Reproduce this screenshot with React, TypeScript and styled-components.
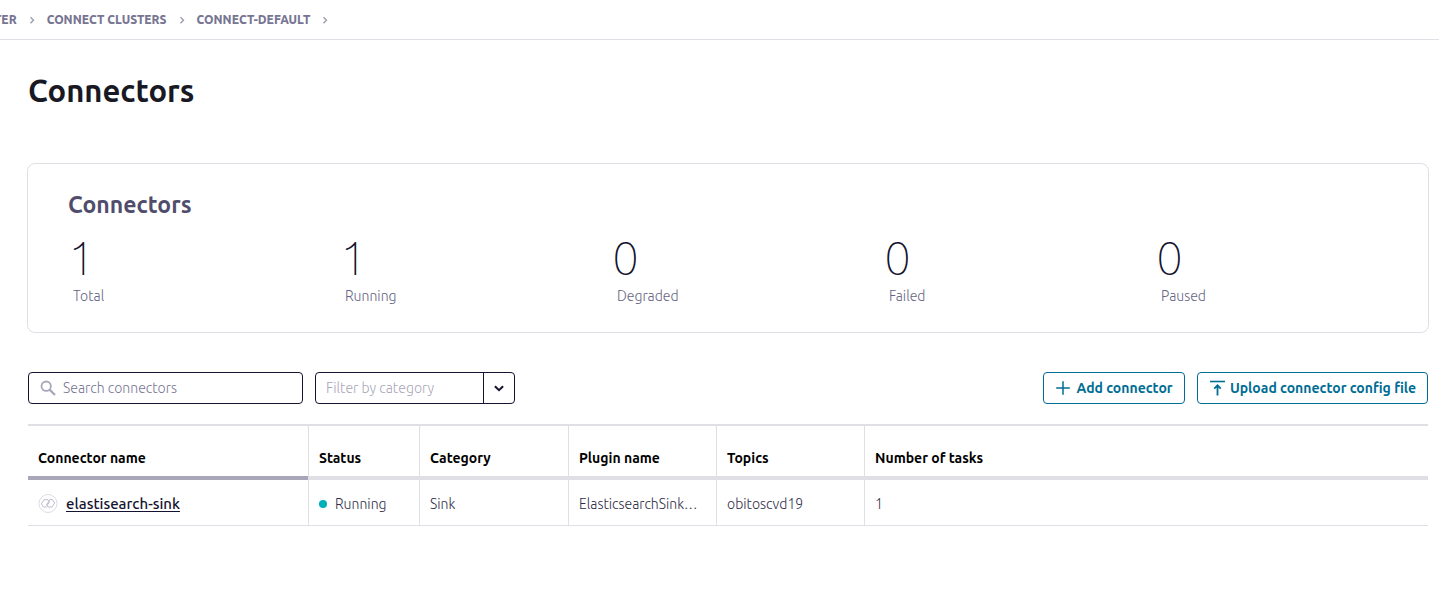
import React from "react";
import styled, { createGlobalStyle } from "styled-components";

const color = {
  ink: "#191924",
  navy: "#15132f",
  slate: "#4f4d6b",
  label: "#65637f",
  muted: "#777592",
  line: "#e0dfe6",
  strong: "#aaa6b9",
  teal: "#006d94",
  running: "#00afba",
};

const GlobalStyle = createGlobalStyle`
  * { box-sizing: border-box; }
  body {
    margin: 0;
    background: #fff;
    color: ${color.ink};
    font-family: "Ubuntu", "Open Sans", "Noto Sans", sans-serif;
    font-size: 14px;
    line-height: 20px;
  }
  button, input, select { font: inherit; }
`;

const Breadcrumbs = styled.nav`
  display: flex;
  align-items: center;
  height: 40px;
  overflow: hidden;
  border-bottom: 1px solid ${color.line};
`;

const CrumbList = styled.ol`
  display: flex;
  align-items: center;
  margin: 0 0 0 -6px;
  padding: 0;
  list-style: none;
`;

const Crumb = styled.li`
  display: flex;
  align-items: center;
  color: ${color.muted};
  font-size: 12px;
  font-weight: 800;
  white-space: nowrap;

  a { color: inherit; text-decoration: none; }
  svg { margin: 0 11px; }
`;

const Main = styled.main`
  padding: 31px 10px 40px 27px;
`;

const PageTitle = styled.h1`
  margin: 0 1px;
  font-size: 31px;
  line-height: 40px;
  font-weight: 700;
`;

const Summary = styled.section`
  margin-top: 52px;
  padding: 25px 0 26px 40px;
  border: 1px solid ${color.line};
  border-radius: 8px;
`;

const SummaryTitle = styled.h2`
  margin: 0;
  color: ${color.slate};
  font-size: 23px;
  line-height: 32px;
  font-weight: 700;
`;

const Stats = styled.dl`
  display: grid;
  grid-template-columns: repeat(5, 1fr);
  margin: 7px 0 0;
`;

const Stat = styled.div`
  display: flex;
  flex-direction: column-reverse;
`;

const StatLabel = styled.dt`
  padding-left: 5px;
  color: ${color.label};
  font-weight: 300;
`;

const StatValue = styled.dd`
  margin: 0;
  height: 58px;
  color: ${color.navy};
  font-size: 48px;
  line-height: 58px;
  font-weight: 100;
`;

const Toolbar = styled.div`
  display: flex;
  gap: 12px;
  margin: 39px 1px 20px;
`;

const SearchBox = styled.label`
  display: flex;
  align-items: center;
  width: 275px;
  height: 32px;
  padding: 0 11px;
  gap: 7px;
  border: 1px solid ${color.navy};
  border-radius: 4px;
`;

const SearchInput = styled.input`
  flex: 1;
  min-width: 0;
  padding: 0;
  border: 0;
  outline: 0;
  background: none;
  color: ${color.ink};
  font-weight: 300;

  &::placeholder { color: ${color.muted}; opacity: 1; }
`;

const SelectBox = styled.div`
  display: grid;
  grid-template-columns: 1fr 31px;
  width: 200px;
  height: 32px;
  border: 1px solid ${color.navy};
  border-radius: 4px;
`;

const Select = styled.select`
  grid-area: 1 / 1 / 2 / 3;
  padding: 0 40px 0 10px;
  border: 0;
  outline: 0;
  appearance: none;
  background: none;
  color: ${color.strong};
  font-weight: 300;
`;

const SelectArrow = styled.span`
  grid-area: 1 / 2;
  display: flex;
  align-items: center;
  justify-content: center;
  border-left: 1px solid ${color.navy};
  pointer-events: none;
`;

const Actions = styled.div`
  display: flex;
  gap: 12px;
  margin-left: auto;
`;

const ActionButton = styled.button<{ $width: number }>`
  display: flex;
  align-items: center;
  justify-content: center;
  gap: 5px;
  width: ${(p) => p.$width}px;
  height: 32px;
  padding: 0;
  border: 1px solid ${color.teal};
  border-radius: 4px;
  background: #fff;
  color: ${color.teal};
  font-weight: 700;
  white-space: nowrap;
`;

const TableWrap = styled.div`
  padding: 0 1px;
`;

const Table = styled.table`
  width: 100%;
  table-layout: fixed;
  border-collapse: separate;
  border-spacing: 0;
`;

const HeadCell = styled.th<{ $width?: number; $sorted?: boolean }>`
  width: ${(p) => (p.$width ? `${p.$width}px` : "auto")};
  height: 56px;
  padding: 14px 10px 0 11px;
  border-top: 2px solid ${color.line};
  border-bottom: 4px solid ${(p) => (p.$sorted ? color.strong : color.line)};
  color: #000;
  font-weight: 700;
  text-align: left;
  white-space: nowrap;
  background: linear-gradient(${color.line}, ${color.line}) left / 1px 100% no-repeat;

  &:first-child { padding-left: 10px; background: none; }
`;

const Cell = styled.td`
  height: 46px;
  padding: 2px 10px 0;
  overflow: hidden;
  border-left: 1px solid ${color.line};
  border-bottom: 1px solid ${color.line};
  color: #2e2c47;
  font-weight: 300;
  text-overflow: ellipsis;
  white-space: nowrap;

  &:first-child { border-left: 0; }
`;

const Inline = styled.span<{ $gap: number }>`
  display: flex;
  align-items: center;
  gap: ${(p) => p.$gap}px;
`;

const NameLink = styled.a`
  color: ${color.navy};
  font-size: 15px;
  font-weight: 500;
  text-underline-offset: 2px;
`;

const Dot = styled.span`
  width: 8px;
  height: 8px;
  border-radius: 50%;
  background: ${color.running};
`;

const CrumbArrow = () => (
  <svg width="8" height="10" viewBox="0 0 8 10" fill="none" stroke="#9a98ad" strokeWidth="1.3" aria-hidden="true">
    <path d="M2.5 2.2 5.500 5.200 2.500 8.200" />
  </svg>
);

const SearchIcon = () => (
  <svg width="16" height="16" viewBox="0 0 16 16" fill="none" stroke={color.strong} aria-hidden="true">
    <circle cx="6.2" cy="6.2" r="4.7" strokeWidth="1.8" />
    <path d="M9.6 9.6 15 15" strokeWidth="2.2" />
  </svg>
);

const ChevronIcon = () => (
  <svg width="10" height="7" viewBox="0 0 10 7" fill="none" stroke={color.navy} strokeWidth="2" aria-hidden="true">
    <path d="M.9 1.2 5 5.1 9.1 1.2" />
  </svg>
);

const PlusIcon = () => (
  <svg width="16" height="16" viewBox="0 0 16 16" fill="none" stroke={color.teal} strokeWidth="1.5" aria-hidden="true">
    <path d="M8 1.2v13.6M1.2 8h13.6" />
  </svg>
);

const UploadIcon = () => (
  <svg width="16" height="16" viewBox="0 0 16 16" fill="none" stroke={color.teal} aria-hidden="true">
    <path d="M1 1.5h15" strokeWidth="1.6" />
    <path d="M8.5 15.5V5.5M5.3 8.6l3.2-3.4 3.2 3.4" strokeWidth="1.8" />
  </svg>
);

const LinkBadge = () => (
  <svg width="20" height="20" viewBox="0 0 20 20" fill="none" aria-hidden="true">
    <circle cx="10" cy="9.5" r="9" stroke="#dcdbe8" />
    <path
      d="M8.5 13H5.500L3.300 9.800 6 5.700h3.800l1.600 2.300-2.700 4.100M11.200 5.700h3.300l2.200 3.200-2.700 4.100h-3.900L8.600 10.700 11.300 6.600"
      stroke="#bdbbcd"
      strokeLinejoin="round"
    />
  </svg>
);

const crumbs = ["TER", "CONNECT CLUSTERS", "CONNECT-DEFAULT"];

const stats = [
  { label: "Total", value: 1 },
  { label: "Running", value: 1 },
  { label: "Degraded", value: 0 },
  { label: "Failed", value: 0 },
  { label: "Paused", value: 0 },
];

const columns = [
  { title: "Connector name", width: 280, sorted: true },
  { title: "Status", width: 111 },
  { title: "Category", width: 149 },
  { title: "Plugin name", width: 148 },
  { title: "Topics", width: 148 },
  { title: "Number of tasks" },
];

export default function App() {
  return (
    <>
      <GlobalStyle />
      <Breadcrumbs aria-label="Breadcrumb">
        <CrumbList>
          {crumbs.map((name) => (
            <Crumb key={name}>
              <a href="#">{name}</a>
              <CrumbArrow />
            </Crumb>
          ))}
        </CrumbList>
      </Breadcrumbs>
      <Main>
        <PageTitle>Connectors</PageTitle>
        <Summary>
          <SummaryTitle>Connectors</SummaryTitle>
          <Stats>
            {stats.map((s) => (
              <Stat key={s.label}>
                <StatLabel>{s.label}</StatLabel>
                <StatValue>{s.value}</StatValue>
              </Stat>
            ))}
          </Stats>
        </Summary>
        <Toolbar>
          <SearchBox>
            <SearchIcon />
            <SearchInput type="text" placeholder="Search connectors" aria-label="Search connectors" />
          </SearchBox>
          <SelectBox>
            <Select aria-label="Filter by category" defaultValue="">
              <option value="">Filter by category</option>
            </Select>
            <SelectArrow>
              <ChevronIcon />
            </SelectArrow>
          </SelectBox>
          <Actions>
            <ActionButton type="button" $width={142}>
              <PlusIcon />
              Add connector
            </ActionButton>
            <ActionButton type="button" $width={231}>
              <UploadIcon />
              Upload connector config file
            </ActionButton>
          </Actions>
        </Toolbar>
        <TableWrap>
          <Table>
            <thead>
              <tr>
                {columns.map((c) => (
                  <HeadCell key={c.title} scope="col" $width={c.width} $sorted={c.sorted}>
                    {c.title}
                  </HeadCell>
                ))}
              </tr>
            </thead>
            <tbody>
              <tr>
                <Cell>
                  <Inline $gap={8}>
                    <LinkBadge />
                    <NameLink href="#">elastisearch-sink</NameLink>
                  </Inline>
                </Cell>
                <Cell>
                  <Inline $gap={8}>
                    <Dot />
                    Running
                  </Inline>
                </Cell>
                <Cell>Sink</Cell>
                <Cell>ElasticsearchSink…</Cell>
                <Cell>obitoscvd19</Cell>
                <Cell>1</Cell>
              </tr>
            </tbody>
          </Table>
        </TableWrap>
      </Main>
    </>
  );
}
